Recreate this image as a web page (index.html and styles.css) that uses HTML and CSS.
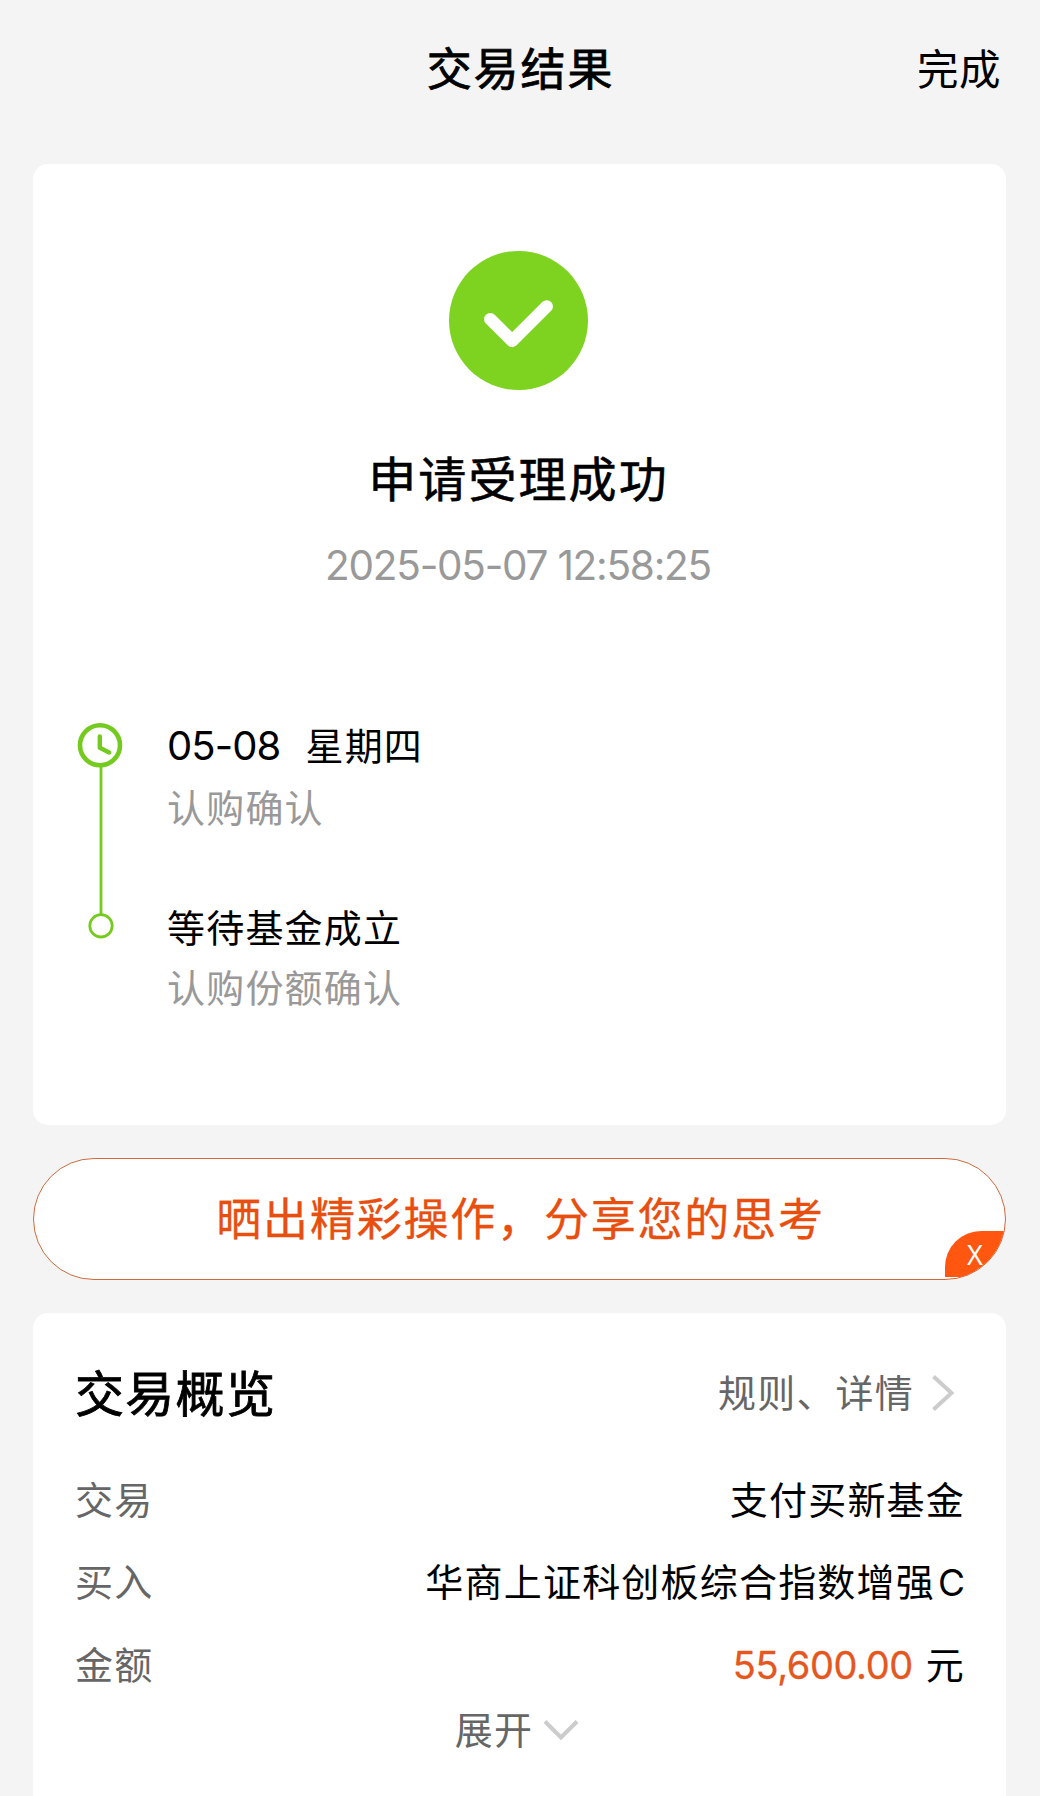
FILE: index.html
```html
<!DOCTYPE html>
<html lang="zh-CN">
<head>
<meta charset="utf-8">
<title>交易结果</title>
<link rel="stylesheet" href="styles.css">
</head>
<body>
<header class="topbar">
  <h1 class="topbar-title">交易结果</h1>
  <a class="topbar-done">完成</a>
</header>
<main class="content">
  <section class="card result">
    <svg class="success-icon" width="139" height="139" viewBox="0 0 138 138">
      <circle cx="69" cy="69" r="69" fill="#7ed321"/>
      <path d="M41 67.7 62.7 89.3 97 55" fill="none" stroke="#fff" stroke-width="12.4" stroke-linecap="round" stroke-linejoin="round"/>
    </svg>
    <h2 class="result-title">申请受理成功</h2>
    <p class="result-time">2025-05-07 12:58:25</p>
    <div class="timeline">
      <svg class="timeline-rail" width="46" height="218" viewBox="0 0 46 218">
        <path d="M24 44V192" stroke="#74ca1e" stroke-width="2.8"/>
        <circle cx="23" cy="23.3" r="20" fill="none" stroke="#74ca1e" stroke-width="4.6"/>
        <path d="M22.8 14.4V25.8L32.2 30.4" fill="none" stroke="#74ca1e" stroke-width="4.4" stroke-linecap="round" stroke-linejoin="round"/>
        <circle cx="24" cy="203.8" r="11.2" fill="#fff" stroke="#74ca1e" stroke-width="2.8"/>
      </svg>
      <ol class="steps">
        <li class="step">
          <p class="step-title"><span class="step-date">05-08</span>星期四</p>
          <p class="step-note">认购确认</p>
        </li>
        <li class="step">
          <p class="step-title">等待基金成立</p>
          <p class="step-note">认购份额确认</p>
        </li>
      </ol>
    </div>
  </section>

  <section class="share">
    <span class="share-text">晒出精彩操作，分享您的思考</span>
    <span class="share-close">X</span>
  </section>

  <section class="card overview">
    <div class="overview-head">
      <h2 class="overview-title">交易概览</h2>
      <a class="overview-link">规则、详情
        <svg class="chevron-right" width="24" height="38" viewBox="0 0 24 38"><path d="M2.5 2.5 20.5 19 2.5 35.5" fill="none" stroke="#ccc" stroke-width="4"/></svg>
      </a>
    </div>
    <dl class="rows">
      <div class="row"><dt>交易</dt><dd>支付买新基金</dd></div>
      <div class="row"><dt>买入</dt><dd>华商上证科创板综合指数增强<span class="share-class">C</span></dd></div>
      <div class="row"><dt>金额</dt><dd><span class="amount">55,600.00</span>元</dd></div>
    </dl>
    <a class="expand">展开
      <svg class="chevron-down" width="36" height="22" viewBox="0 0 36 22"><path d="M2 2.5 18 18.5 34 2.5" fill="none" stroke="#ccc" stroke-width="4"/></svg>
    </a>
  </section>
</main>
</body>
</html>
```
FILE: styles.css
```css
* {
  box-sizing: border-box;
  margin: 0;
  padding: 0;
}

body {
  height: 1796px;
  overflow: hidden;
  background: #f4f4f4;
  color: #000;
  font-family: "Noto Sans CJK SC", sans-serif;
  font-size: 38px;
  letter-spacing: 1.2px;
  line-height: 60px;
}

h1,
h2 {
  font-weight: 400;
  -webkit-text-stroke: 0.8px currentColor;
}

.topbar {
  display: grid;
  grid-template-columns: 1fr auto 1fr;
  align-items: center;
  height: 163.5px;
  padding: 0 39px 29px 40px;
}

.topbar-title {
  grid-column: 2;
  font-size: 45px;
  letter-spacing: 1.9px;
}

.topbar-done {
  justify-self: end;
  margin-top: -1px;
  font-size: 41.5px;
  letter-spacing: 0.5px;
}

.content {
  display: flex;
  flex-direction: column;
  gap: 33px;
  padding: 0 34px 0 33px;
}

.card {
  border-radius: 15px;
  background: #fff;
}

.result {
  display: flex;
  flex-direction: column;
  align-items: center;
  height: 961.5px;
  padding: 87.5px 2px 0 0;
}

.result-title {
  margin-top: 55.5px;
  font-size: 48px;
  letter-spacing: 2.1px;
  -webkit-text-stroke-width: 0.6px;
}

.result-time {
  margin-top: 30px;
  padding-right: 1px;
  color: #999;
  font-family: Inter, sans-serif;
  font-size: 40.5px;
  letter-spacing: -1.25px;
}

.timeline {
  display: flex;
  gap: 44px;
  align-self: stretch;
  margin-top: 117px;
  padding-left: 44px;
}

.timeline-rail {
  margin-top: 9.5px;
}

.steps {
  display: flex;
  flex-direction: column;
  gap: 60px;
  padding-top: 1px;
  list-style: none;
}

.step-date {
  margin-right: 25px;
  font-family: Inter, sans-serif;
  font-size: 40px;
  letter-spacing: -0.9px;
}

.step-note {
  color: #999;
}

.share {
  position: relative;
  display: flex;
  justify-content: center;
  align-items: center;
  height: 122px;
  overflow: hidden;
  border: 1.5px solid #cf6a3c;
  border-radius: 61px;
  background: #fff;
}

.share-text {
  padding: 0 0 5px 2px;
  color: #e84e0e;
  font-size: 45px;
  letter-spacing: 1.8px;
  -webkit-text-stroke: 0.3px currentColor;
}

.share-close {
  position: absolute;
  right: 0;
  bottom: 2px;
  width: 60px;
  height: 46px;
  padding-left: 22px;
  border-radius: 36px 0 0 0;
  background: #ff5610;
  color: #fff;
  font-family: "Noto Sans", sans-serif;
  font-size: 27px;
  line-height: 47px;
}

.overview {
  height: 500px;
  padding: 48px 41px 0 42px;
}

.overview-head {
  display: flex;
  justify-content: space-between;
  align-items: center;
}

.overview-title {
  font-size: 49px;
  letter-spacing: 1.3px;
}

.overview-link {
  display: flex;
  align-items: center;
  gap: 17px;
  padding-right: 10px;
  color: #666;
}

.chevron-right {
  margin-top: 3px;
}

.rows {
  display: flex;
  flex-direction: column;
  gap: 21.5px;
  margin-top: 47px;
}

.row {
  display: flex;
  justify-content: space-between;
}

.row dt {
  color: #666;
}

.row:last-child {
  margin-top: -1px;
}

.share-class {
  margin-left: 3px;
  font-family: Inter, sans-serif;
  font-size: 37px;
  letter-spacing: 0;
}

.amount {
  margin-right: 13px;
  color: #e4571f;
  font-family: Inter, sans-serif;
  letter-spacing: -0.4px;
  -webkit-text-stroke: 0.3px currentColor;
}

.expand {
  display: flex;
  justify-content: center;
  align-items: center;
  gap: 10px;
  margin-top: 3px;
  padding-right: 6px;
  color: #666;
}

.chevron-down {
  margin-top: 3px;
}
```
